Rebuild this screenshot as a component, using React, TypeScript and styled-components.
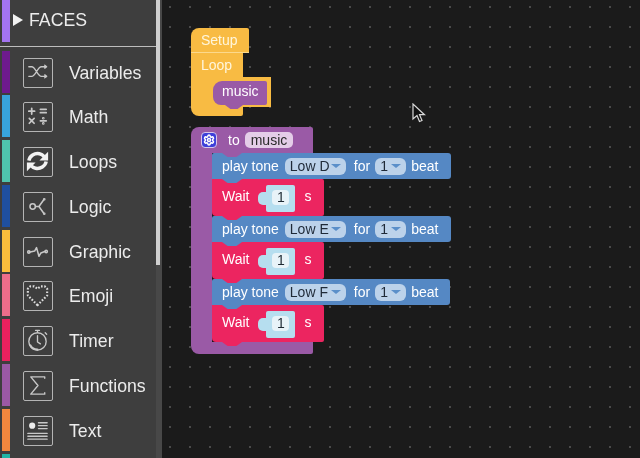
import React from 'react';
import styled, { createGlobalStyle } from 'styled-components';
import { Settings } from 'lucide-react';

const Global = createGlobalStyle`
  html, body { margin: 0; padding: 0; background: #1b1b1b; }
  body { font-family: "Liberation Sans", Arial, sans-serif; }
`;

const Page = styled.div`
  display: flex;
  width: 640px;
  height: 458px;
  overflow: hidden;
  filter: blur(0.35px);
`;

const Sidebar = styled.div`
  width: 156px;
  flex: none;
  height: 458px;
  overflow: hidden;
  background: #3e3e3e;
  color: #ececec;
`;

const FacesRow = styled.div`
  display: flex;
  height: 46px;
  border-bottom: 1.5px solid #bdbdbd;
  box-sizing: content-box;
  margin-bottom: 3.5px;
`;

const Strip = styled.div<{ $color: string }>`
  width: 8px;
  height: 42px;
  margin-left: 2px;
  flex: none;
  background: ${(p) => p.$color};
`;

const FacesTitle = styled.div`
  display: flex;
  align-items: center;
  height: 40px;
  padding-left: 3px;
  font-size: 17.7px;
`;

const Triangle = styled.span`
  width: 0;
  height: 0;
  margin-right: 6px;
  border-left: 10px solid #f2f2f2;
  border-top: 6px solid transparent;
  border-bottom: 6px solid transparent;
`;

const Item = styled.div`
  display: flex;
  height: 44.8px;
`;

const IconBox = styled.div`
  width: 30px;
  height: 30px;
  margin: 7px 0 0 13px;
  flex: none;
  box-sizing: border-box;
  border: 1.5px solid #b4b4b4;
  border-radius: 2px;
`;

const ItemLabel = styled.span`
  margin: 12px 0 0 16px;
  font-size: 17.7px;
  line-height: 20px;
`;

const ScrollTrack = styled.div`
  width: 6px;
  flex: none;
  background: #484848;
`;

const ScrollThumb = styled.div`
  width: 4px;
  height: 265px;
  background: #cfcfcf;
`;

const Canvas = styled.div`
  position: relative;
  flex: 1;
  height: 458px;
  background-color: #1b1b1b;
  background-image: radial-gradient(circle at center, #4c4c4c 0, #4c4c4c 0.7px, transparent 1px);
  background-size: 20px 20px;
  background-position: -2px -3px;
`;

const Stack = styled.div<{ $x: number; $y: number }>`
  position: absolute;
  left: ${(p) => p.$x}px;
  top: ${(p) => p.$y}px;
  display: flex;
  flex-direction: column;
  align-items: flex-start;
  font-size: 14px;
  color: #fff;
`;

const SetupBlock = styled.div`
  position: relative;
  z-index: 1;
  width: 58px;
  height: 25px;
  padding: 4px 0 0 10px;
  box-sizing: border-box;
  background: #f8bb43;
  border-radius: 8px 2px 0 0;
  border-bottom: 1px solid #fcd98c;
  color: #fff6dc;
  &::after {
    content: '';
    position: absolute;
    left: 10px;
    bottom: -5px;
    width: 20px;
    height: 4px;
    background: #f8bb43;
    clip-path: polygon(0 0, 100% 0, 65% 100%, 35% 100%);
  }
`;

const LoopHead = styled.div`
  width: 52px;
  height: 24px;
  padding: 4px 0 0 10px;
  box-sizing: border-box;
  background: #f8bb43;
  color: #fff6dc;
`;

const LoopBody = styled.div`
  display: flex;
`;

const LoopArm = styled.div`
  width: 22px;
  background: #f8bb43;
`;

const Highlight = styled.div`
  padding: 4px 4px 2px 0;
  background: #f8bb43;
`;

const MusicCall = styled.div`
  position: relative;
  width: 54px;
  height: 24px;
  padding: 2px 0 0 9px;
  box-sizing: border-box;
  background: #9a5aa6;
  border-radius: 9px 2px 2px 8px;
  &::after {
    content: '';
    position: absolute;
    left: 12px;
    bottom: -4px;
    width: 18px;
    height: 4px;
    background: #9a5aa6;
    clip-path: polygon(0 0, 100% 0, 70% 100%, 30% 100%);
  }
`;

const LoopFoot = styled.div`
  width: 52px;
  height: 9px;
  background: #f8bb43;
  border-radius: 0 0 2px 8px;
`;

const FuncHead = styled.div`
  position: relative;
  display: flex;
  align-items: center;
  width: 122px;
  height: 26px;
  padding-left: 10px;
  box-sizing: border-box;
  background: #9a5aa6;
  border-radius: 8px 2px 0 0;
  &::after {
    content: '';
    position: absolute;
    z-index: 2;
    left: 31px;
    bottom: -4px;
    width: 20px;
    height: 4px;
    background: #9a5aa6;
    clip-path: polygon(0 0, 100% 0, 72% 100%, 28% 100%);
  }
`;

const GearBadge = styled.span`
  display: flex;
  align-items: center;
  justify-content: center;
  width: 16px;
  height: 16px;
  margin-right: 11px;
  box-sizing: border-box;
  background: #3d3fd9;
  border: 1px solid #d9c6ea;
  border-radius: 4px;
  color: #fff;
`;

const NamePill = styled.span`
  height: 16px;
  line-height: 16px;
  margin-left: 5px;
  padding: 0 6px;
  background: #e4cde8;
  border-radius: 5px;
  color: #2a2a2a;
`;

const FuncBody = styled.div`
  display: flex;
  background: transparent;
`;

const FuncArm = styled.div`
  width: 21px;
  background: #9a5aa6;
`;

const Rows = styled.div`
  display: flex;
  flex-direction: column;
  align-items: flex-start;
`;

const FuncFoot = styled.div`
  width: 122px;
  height: 12px;
  background: #9a5aa6;
  border-radius: 0 0 2px 8px;
`;

const Notched = styled.div<{ $bg: string }>`
  position: relative;
  display: flex;
  align-items: center;
  background: ${(p) => p.$bg};
  padding-left: 10px;
  box-sizing: border-box;
  &::after {
    content: '';
    position: absolute;
    z-index: 2;
    left: 10px;
    bottom: -4px;
    width: 20px;
    height: 4px;
    background: ${(p) => p.$bg};
    clip-path: polygon(0 0, 100% 0, 72% 100%, 28% 100%);
  }
`;

const ToneRow = styled(Notched)<{ $width: number }>`
  width: ${(p) => p.$width}px;
  height: 26px;
  border-radius: 2px 3px 3px 0;
`;

const WaitRow = styled(Notched)<{ $h: number }>`
  width: 112px;
  height: ${(p) => p.$h}px;
  padding-bottom: 3px;
  border-radius: 0 2px 2px 4px;
`;

const Dropdown = styled.span<{ $width: number; $ml: number }>`
  display: flex;
  align-items: center;
  justify-content: space-between;
  width: ${(p) => p.$width}px;
  height: 17px;
  margin-left: ${(p) => p.$ml}px;
  padding: 0 5px 0 5px;
  box-sizing: border-box;
  background: #bcd2ea;
  border-radius: 6px;
  color: #1f2a38;
  font-size: 14px;
`;

const Caret = styled.span`
  width: 0;
  height: 0;
  border-top: 4.5px solid #5b8fc9;
  border-left: 5px solid transparent;
  border-right: 5px solid transparent;
`;

const Word = styled.span<{ $ml?: number }>`
  margin-left: ${(p) => p.$ml ?? 0}px;
`;

const Socket = styled.div`
  position: relative;
  display: flex;
  align-items: center;
  justify-content: center;
  width: 29px;
  height: 27px;
  margin: 5px 0 0 17px;
  padding-bottom: 3px;
  box-sizing: border-box;
  background: #b6deef;
  border-radius: 2px;
  &::before {
    content: '';
    position: absolute;
    left: -8px;
    top: 7px;
    width: 8px;
    height: 13px;
    background: #b6deef;
    border-radius: 5px 0 0 5px;
  }
`;

const NumberField = styled.span`
  width: 17px;
  height: 15px;
  line-height: 15px;
  text-align: center;
  background: #e8f3f8;
  border-radius: 4px;
  color: #1e2a33;
`;

const Pointer = styled.svg`
  position: absolute;
  left: 250px;
  top: 103px;
`;

const stroke = { fill: 'none', stroke: '#c8c8c8', strokeWidth: 1.4, strokeLinecap: 'round' as const, strokeLinejoin: 'round' as const };

const icons: Record<string, React.ReactNode> = {
  Variables: (
    <path {...stroke} d="M5 8h3c4 0 6 10 10 10h5M5 18h3c4 0 6-10 10-10h5M21.500 6.500l2 1.500-2 1.500M21.500 16.500l2 1.500-2 1.500" />
  ),
  Math: (
    <g {...stroke} strokeWidth={1.8}>
      <path d="M5 8.500h6M8 5.500v6M17 6.500h6M17 10h6M5.500 16l5 5M10.500 16l-5 5M17 18.500h6" />
      <circle cx="20" cy="15.800" r="0.5" />
      <circle cx="20" cy="21.200" r="0.5" />
    </g>
  ),
  Loops: (
    <g fill="none" stroke="#f2f2f2" strokeWidth={3.6}>
      <path d="M5 13c1-5 6-8 11-7 2 .4 3.500 1.300 5 3" />
      <path d="M23 14c-1 5-6 8-11 7-2-.4-3.500-1.300-5-3" />
      <path fill="#f2f2f2" stroke="none" d="M25 4v9h-9zM3 24v-9h9z" />
    </g>
  ),
  Logic: (
    <g {...stroke} strokeWidth={1.6}>
      <circle cx="9" cy="14" r="2.800" />
      <path d="M12 14h3.500l5-7M15.500 14l5 7" />
      <circle cx="21" cy="6.500" r="0.6" />
      <circle cx="21" cy="21.500" r="0.6" />
    </g>
  ),
  Graphic: (
    <g {...stroke} strokeWidth={1.6}>
      <circle cx="5" cy="14.500" r="1.200" />
      <circle cx="23" cy="14" r="1.200" />
      <path d="M6.500 14.500l4.500-1 2-3.500 2.500 9 2-3.500 4-1.500" />
    </g>
  ),
  Emoji: (
    <path
      {...stroke}
      stroke="#dcdcdc"
      strokeWidth={2.2}
      strokeDasharray="1.700 1.700"
      strokeLinecap="butt"
      d="M14 24l-10-10V7l2.500-2.500h4L14 7l3.500-2.500h4L24 7v7z"
    />
  ),
  Timer: (
    <g {...stroke}>
      <circle cx="14" cy="15" r="9" />
      <path d="M14 9v6.500l3 2M12 3.500h4M14 3.500v2M22 6l1.500 1.500" />
      <path strokeWidth={2.200} d="M6.500 19c1.500 3 4 4.500 7.500 4.500" />
    </g>
  ),
  Functions: <path {...stroke} d="M21.500 6.500V5h-14.500l7.500 9-7.500 9h14.500v-1.500" />,
  Text: (
    <g {...stroke}>
      <circle cx="8.500" cy="9" r="3.200" fill="#ececec" stroke="none" />
      <path d="M15 6h9M15 9h9M15 12h9M4 17h20M4 20h20M4 23h20" />
    </g>
  ),
};

const categories = [
  { name: 'Variables', color: '#6e1a8e' },
  { name: 'Math', color: '#38a4dc' },
  { name: 'Loops', color: '#4fc4ad' },
  { name: 'Logic', color: '#1f4f9f' },
  { name: 'Graphic', color: '#fbbd3c' },
  { name: 'Emoji', color: '#ec6d8a' },
  { name: 'Timer', color: '#e9215e' },
  { name: 'Functions', color: '#9b59a5' },
  { name: 'Text', color: '#f2873e' },
  { name: 'Extra', color: '#1fb5a5' },
];

const tones = [
  { note: 'Low D', width: 239, waitH: 37 },
  { note: 'Low E', width: 239, waitH: 37 },
  { note: 'Low F', width: 238, waitH: 37 },
];

const BLUE = '#5588c4';
const RED = '#ec2560';

export default function App() {
  return (
    <Page>
      <Global />
      <Sidebar>
        <FacesRow>
          <Strip $color="#a374f2" />
          <FacesTitle>
            <Triangle />
            FACES
          </FacesTitle>
        </FacesRow>
        {categories.map((c) => (
          <Item key={c.name}>
            <Strip $color={c.color} />
            {c.name !== 'Extra' && (
              <>
                <IconBox>
                  <svg width="27" height="27" viewBox="0 0 28 28">
                    {icons[c.name]}
                  </svg>
                </IconBox>
                <ItemLabel>{c.name}</ItemLabel>
              </>
            )}
          </Item>
        ))}
      </Sidebar>
      <ScrollTrack>
        <ScrollThumb />
      </ScrollTrack>
      <Canvas>
        <Stack $x={29} $y={28}>
          <SetupBlock>Setup</SetupBlock>
          <LoopHead>Loop</LoopHead>
          <LoopBody>
            <LoopArm />
            <Highlight>
              <MusicCall>music</MusicCall>
            </Highlight>
          </LoopBody>
          <LoopFoot />
        </Stack>

        <Stack $x={29} $y={127}>
          <FuncHead>
            <GearBadge>
              <Settings size={12} strokeWidth={3} />
            </GearBadge>
            to
            <NamePill>music</NamePill>
          </FuncHead>
          <FuncBody>
            <FuncArm />
            <Rows>
              {tones.map((t) => (
                <React.Fragment key={t.note}>
                  <ToneRow $bg={BLUE} $width={t.width}>
                    play tone
                    <Dropdown $width={61} $ml={6}>
                      {t.note}
                      <Caret />
                    </Dropdown>
                    <Word $ml={8}>for</Word>
                    <Dropdown $width={31} $ml={5}>
                      1
                      <Caret />
                    </Dropdown>
                    <Word $ml={5}>beat</Word>
                  </ToneRow>
                  <WaitRow $bg={RED} $h={t.waitH}>
                    Wait
                    <Socket>
                      <NumberField>1</NumberField>
                    </Socket>
                    <Word $ml={9}>s</Word>
                  </WaitRow>
                </React.Fragment>
              ))}
            </Rows>
          </FuncBody>
          <FuncFoot />
        </Stack>

        <Pointer width="14" height="20" viewBox="0 0 14 20">
          <path d="M1 1v15l4-3.500 2.500 6 2.500-1-2.500-5.800h5z" fill="#111" stroke="#d8d8d8" strokeWidth="1.200" />
        </Pointer>
      </Canvas>
    </Page>
  );
}
